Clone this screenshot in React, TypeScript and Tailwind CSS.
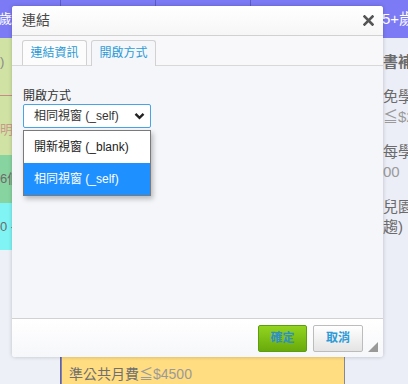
import React from "react";

const cjk = { fontFamily: '"Liberation Sans", "Noto Sans CJK TC", sans-serif' };

function Background() {
  return (
    <div className="flex h-full w-full text-[13px] leading-5" style={cjk}>
      <div className="flex w-[60px] flex-col">
        <div className="flex h-[38px] items-center bg-[#7c7af4] pl-0 text-white">
          <span className="-ml-[1px]">歲</span>
        </div>
        <div className="flex h-[117px] flex-col bg-[#d0e3a4] text-[#8a8a8a]">
          <span className="mt-[14px]">)</span>
          <span className="mt-[13px] text-[#c98a8a]">—</span>
          <span className="mt-[15px] text-[#c99a8a]">明</span>
        </div>
        <div className="flex h-[48px] items-center bg-[#88d4a0] text-[#6b6b6b]">6個</div>
        <div className="flex h-[47px] items-center bg-[#80f4f4] text-[#6b6b6b]">0 -</div>
        <div className="flex-1 bg-[#eef0f8]" />
      </div>
      <div className="flex flex-1 flex-col border-l border-[#5c5cc4]">
        <div className="flex h-[38px]">
          <div className="flex-1 bg-[#7c7af4]" />
          <div className="flex-1 border-l border-[#5c5cc4] bg-[#7c7af4]" />
          <div className="flex-1 border-l border-[#5c5cc4] bg-[#7c7af4]" />
        </div>
        <div className="flex-1 bg-[#f5f6fa]" />
        <div className="h-[62px] whitespace-nowrap border-x border-[#888] bg-[#ffdd80] pl-[7px] pt-[43px] text-[14px] leading-[18px] text-[#707070]">
          準公共月費<span className="text-[#9a9a9a]">≦$4500</span>
        </div>
      </div>
      <div className="flex w-[63px] flex-col overflow-hidden whitespace-nowrap">
        <div className="flex h-[38px] items-center bg-[#7c7af4] pl-[37px] text-[15px] text-white">
          5+歲
        </div>
        <div className="flex flex-1 flex-col bg-[#ebeef7] pl-[38px] text-[15px] text-[#6b6b6b]">
          <span className="mt-[14px] font-bold">書補</span>
          <span className="mt-[15px]">免學</span>
          <span className="text-[#9a9a9a]">≦$2</span>
          <span className="mt-[15px]">每學</span>
          <span className="text-[#9a9a9a]">00</span>
          <span className="mt-[15px]">兒園</span>
          <span>趨)</span>
        </div>
      </div>
    </div>
  );
}

export default function App() {
  return (
    <div className="relative h-[384px] w-[408px] overflow-hidden bg-[#ebeef7]">
      <Background />

      <div
        className="absolute left-[12px] top-[6px] flex h-[351px] w-[371px] flex-col overflow-hidden rounded-[3px] bg-[#f5f6fa] shadow-[0_0_4px_rgba(0,0,0,0.2)]"
        style={cjk}
      >
        <div className="flex h-[30px] shrink-0 items-center justify-between border-b border-[#d1d1d1] bg-gradient-to-b from-[#ffffff] to-[#f6f6f6] pl-[10px] pr-[9px]">
          <span className="text-[14px] text-[#484848]">連結</span>
          <svg width="11" height="11" viewBox="0 0 11 11">
            <path d="M1.5 1.5 L9.5 9.5 M9.5 1.5 L1.5 9.5" stroke="#555" strokeWidth="2.6" strokeLinecap="square" />
          </svg>
        </div>

        <div className="flex h-[30px] shrink-0 items-end gap-[4px] border-b border-[#d8d8d8] bg-[#f8f8fa] pl-[10px]">
          <div className="flex h-[25px] w-[65px] items-center justify-center rounded-t-[3px] border border-b-0 border-[#d1d1d1] bg-[#fcfcfc] text-[12px] text-[#2b9ad6]">
            連結資訊
          </div>
          <div className="-mb-px flex h-[26px] w-[65px] items-center justify-center rounded-t-[3px] border border-b-0 border-[#d1d1d1] bg-[#f5f6fa] pb-px text-[12px] text-[#2b9ad6]">
            開啟方式
          </div>
        </div>

        <div className="flex-1 px-[11px] pt-[23px]">
          <div className="text-[12px] leading-[14px] text-[#333]">開啟方式</div>
          <div className="mt-[1px] flex h-[24px] w-[128px] items-center justify-between rounded-[2px] border border-[#4aa3e2] bg-white pl-[10px] pr-[5px] text-[12px] text-[#333]">
            <span>相同視窗 (_self)</span>
            <svg width="11" height="8" viewBox="0 0 11 8">
              <path d="M1.5 1.8 L5.5 5.8 L9.5 1.8" fill="none" stroke="#222" strokeWidth="2.4" />
            </svg>
          </div>
        </div>

        <div className="relative flex h-[39px] shrink-0 items-center justify-end gap-[6px] border-t border-[#d1d1d1] bg-gradient-to-b from-[#ffffff] to-[#f6f7fa] pr-[20px]">
          <button className="flex h-[27px] w-[49px] items-center justify-center rounded-[2px] border border-[#5c9e10] bg-gradient-to-b from-[#92d41e] to-[#69aa0c] text-[12px] font-bold text-[#2f8fc4]">
            確定
          </button>
          <button className="flex h-[27px] w-[50px] items-center justify-center rounded-[2px] border border-[#bcbcbc] bg-gradient-to-b from-[#ffffff] to-[#e4e4e4] text-[12px] font-bold text-[#2b9ad6]">
            取消
          </button>
          <svg className="absolute bottom-[5px] right-[5px]" width="10" height="10" viewBox="0 0 10 10">
            <path d="M10 0 L10 10 L0 10 Z" fill="#999" />
          </svg>
        </div>
      </div>

      <div
        className="absolute left-[23px] top-[130px] w-[128px] border border-[#7a7a7a] bg-white text-[12px] shadow-[2px_3px_5px_rgba(0,0,0,0.25)]"
        style={cjk}
      >
        <div className="flex h-[32px] items-center pl-[10px] text-[#222]">開新視窗 (_blank)</div>
        <div className="flex h-[32px] items-center bg-[#1e90ff] pl-[10px] text-white">相同視窗 (_self)</div>
      </div>
    </div>
  );
}
